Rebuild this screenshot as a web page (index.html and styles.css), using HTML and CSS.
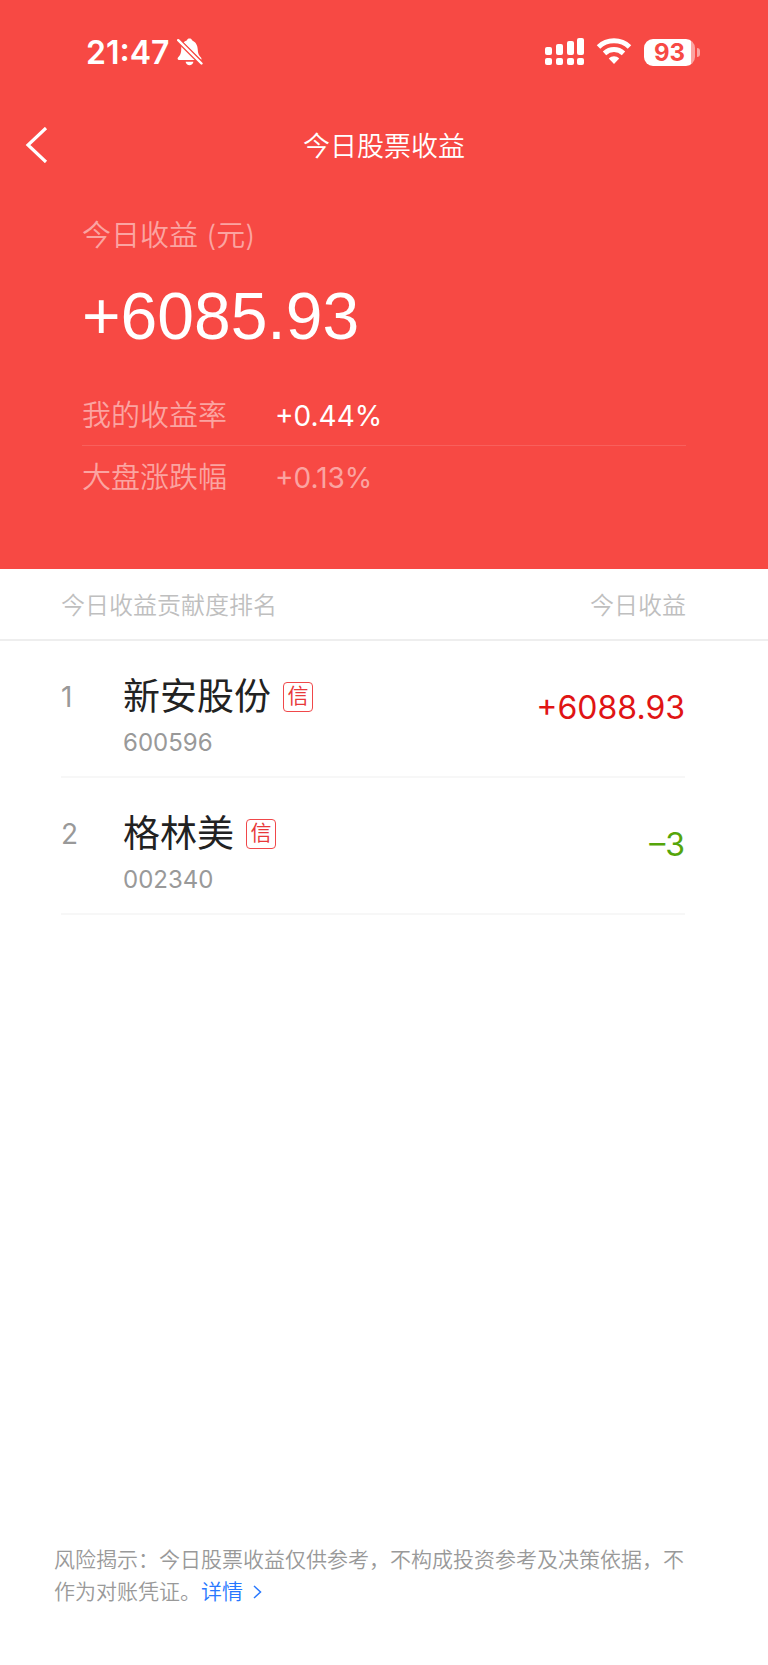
FILE: index.html
```html
<!DOCTYPE html>
<html lang="zh-CN">

<head>
    <meta charset="UTF-8">
    <meta name="viewport" content="width=device-width, initial-scale=1.0">
    <title>今日股票收益</title>
    <link rel="stylesheet" href="styles.css">
</head>

<body>

    <!-- Top section -->
    <header class="hero">
        <div class="status-bar">
            <div class="status-left">
                <span class="time">21:47</span>
                <svg class="bell" width="26" height="28" viewBox="0 0 26 28" aria-hidden="true">
                    <path d="M4.400 7.500L18.900 22H2C.6 22 .2 20.700 1 19.600C3 17.200 4 16 4.200 12C4.300 10.400 4.300 9 4.400 7.500Z" fill="#fff" />
                    <path d="M6.400 4.600C7.400 3.500 8.600 2.800 9.700 2.500C10.200 1 11.200 .4 12.500 .4C13.800 .4 14.800 1 15.300 2.500C18.600 4 20.600 7 20.800 12C21 16 22 17.200 24 19.600C24.500 20.300 24.600 21 24.300 22Z" fill="#fff" />
                    <path d="M8.600 23.800H16.400C16 26 14.500 27.200 12.500 27.200C10.500 27.200 9 26 8.600 23.800Z" fill="#fff" />
                    <path d="M1 2L25 26" stroke="#f74944" stroke-width="4.800" />
                    <path d="M1.200 2.200L24.500 25.500" stroke="#fff" stroke-width="2.400" stroke-linecap="round" />
                </svg>
            </div>
            <div class="status-right">
                <svg width="39" height="28" viewBox="0 0 39 28" fill="#fff" aria-hidden="true">
                    <rect x="0" y="9" width="7" height="8" rx="2" />
                    <rect x="11" y="6" width="7" height="11" rx="2" />
                    <rect x="22" y="3" width="7" height="14" rx="2" />
                    <rect x="32" y="0" width="7" height="17" rx="2" />
                    <rect x="0" y="20" width="7" height="7" rx="2" />
                    <rect x="11" y="20" width="7" height="7" rx="2" />
                    <rect x="22" y="20" width="7" height="7" rx="2" />
                    <rect x="32" y="20" width="7" height="7" rx="2" />
                </svg>
                <svg width="36" height="28" viewBox="0 0 36 28" aria-hidden="true">
                    <path d="M2.500 9C11 0.800 25 0.800 33.500 9" fill="none" stroke="#fff" stroke-width="5" />
                    <path d="M8.500 15.300C14 10.300 22 10.300 27.500 15.300" fill="none" stroke="#fff" stroke-width="5" />
                    <path d="M12.800 20.500C15.800 17.600 20.200 17.600 23.200 20.500L18 26Z" fill="#fff" />
                </svg>
                <div class="battery">
                    <span class="battery-level">93</span>
                    <span class="battery-cap"></span>
                </div>
            </div>
        </div>

        <nav class="nav-bar">
            <a class="back" href="#" aria-label="返回">
                <svg width="24" height="36" viewBox="0 0 24 36" fill="none" stroke="#fff" stroke-width="3.200">
                    <path d="M22 1L4 18L22 35" />
                </svg>
            </a>
            <h1>今日股票收益</h1>
        </nav>

        <div class="summary">
            <p class="label">今日收益 (元)</p>
            <p class="total">+6085.93</p>
            <div class="rate">
                <span class="label">我的收益率</span>
                <span class="rate-value">+0.44%</span>
            </div>
            <div class="rate rate-market">
                <span class="label">大盘涨跌幅</span>
                <span class="rate-value">+0.13%</span>
            </div>
        </div>
    </header>

    <!-- Ranking -->
    <main>
        <div class="list-head">
            <span>今日收益贡献度排名</span>
            <span>今日收益</span>
        </div>
        <ol class="list">
            <li class="item">
                <span class="rank">1</span>
                <div class="stock">
                    <h2>新安股份 <span class="badge">信</span></h2>
                    <p>600596</p>
                </div>
                <span class="profit up">+6088.93</span>
            </li>
            <li class="item">
                <span class="rank">2</span>
                <div class="stock">
                    <h2>格林美 <span class="badge">信</span></h2>
                    <p>002340</p>
                </div>
                <span class="profit down">–3</span>
            </li>
        </ol>
    </main>

    <footer class="notice">
        风险揭示：今日股票收益仅供参考，不构成投资参考及决策依据，不作为对账凭证。<a href="#">详情<svg width="9" height="14" viewBox="0 0 9 14" fill="none" stroke="#2878ff" stroke-width="1.500" aria-hidden="true"><path d="M1 1L7.500 7L1 13" /></svg></a>
    </footer>

</body>

</html>
```
FILE: styles.css
```css
* {
    margin: 0;
    padding: 0;
    box-sizing: border-box;
}

body {
    display: flex;
    flex-direction: column;
    min-height: 100vh;
    background-color: #fff;
    font-family: Inter, "Noto Sans CJK SC", sans-serif;
    font-weight: 350;
    color: #222;
}

a {
    color: #2878ff;
    text-decoration: none;
}

/* Top section */
.hero {
    background-color: #f74944;
    color: #fff;
    padding-bottom: 61px;
}

.status-bar {
    display: flex;
    justify-content: space-between;
    align-items: center;
    height: 104px;
    padding: 0 68px 0 86px;
}

.status-left,
.status-right {
    display: flex;
    align-items: center;
}

.status-left {
    gap: 8px;
}

.status-right {
    gap: 12px;
}

.time {
    font-size: 32px;
    font-weight: 600;
}

.battery {
    display: flex;
    align-items: center;
    gap: 2px;
}

.battery-level {
    width: 51px;
    height: 27px;
    border-radius: 9px;
    background: linear-gradient(to right, #fff 47px, #fba4a1 47px);
    color: #f74944;
    font-size: 24px;
    font-weight: 700;
    line-height: 27px;
    text-align: center;
}

.battery-cap {
    width: 3px;
    height: 9px;
    border-radius: 0 3px 3px 0;
    background-color: #fba4a1;
}

.nav-bar {
    display: grid;
    grid-template-columns: 60px 1fr 60px;
    align-items: center;
    height: 82px;
    padding: 0 24px;
}

.back {
    display: flex;
}

.nav-bar h1 {
    padding-bottom: 2px;
    font-size: 27px;
    font-weight: 350;
    text-align: center;
}

.summary {
    padding: 26px 82px 0;
}

.label {
    color: #fba4a1;
    font-size: 29px;
    line-height: 48px;
}

.total {
    font-family: "Liberation Sans", sans-serif;
    font-size: 66px;
    line-height: 76px;
    padding: 18px 0 30px;
}

.rate {
    display: grid;
    grid-template-columns: 193px 1fr;
    align-items: center;
    height: 62px;
    padding-top: 2px;
    border-bottom: 1px solid #f8605c;
}

.rate-value {
    font-size: 28px;
    font-weight: 400;
}

.rate-market {
    border-bottom: none;
}

.rate-market .rate-value {
    color: #fba4a1;
}

/* Ranking */
.list-head {
    display: flex;
    justify-content: space-between;
    align-items: center;
    height: 72px;
    padding: 0 82px 2px 61px;
    border-bottom: 2px solid #eee;
    color: #bfbfbf;
    font-size: 24px;
}

.list {
    list-style: none;
    padding: 0 83px 0 61px;
}

.item {
    display: grid;
    grid-template-columns: 62px 1fr auto;
    padding: 30px 0 17px;
    border-bottom: 2px solid #f7f7f7;
}

.rank {
    color: #999;
    font-size: 28px;
    font-weight: 400;
    line-height: 52px;
}

.stock h2 {
    display: flex;
    align-items: center;
    gap: 12px;
    font-size: 37px;
    font-weight: 400;
    line-height: 52px;
}

.stock p {
    color: #999;
    font-size: 24px;
    font-weight: 400;
    line-height: 32px;
    padding-top: 4px;
}

.badge {
    width: 30px;
    height: 30px;
    border: 1px solid #f0484a;
    border-radius: 4px;
    color: #e8383a;
    font-size: 21px;
    line-height: 26px;
    text-align: center;
}

.profit {
    font-size: 32px;
    font-weight: 400;
    line-height: 74px;
}

.up {
    color: #e01414;
}

.down {
    color: #55a50a;
}

/* Risk notice */
.notice {
    margin-top: auto;
    padding: 0 68px 57px 54px;
    color: #999;
    font-size: 21px;
    line-height: 32px;
}

.notice a {
    display: inline-block;
}

.notice svg {
    margin-left: 10px;
}
```
